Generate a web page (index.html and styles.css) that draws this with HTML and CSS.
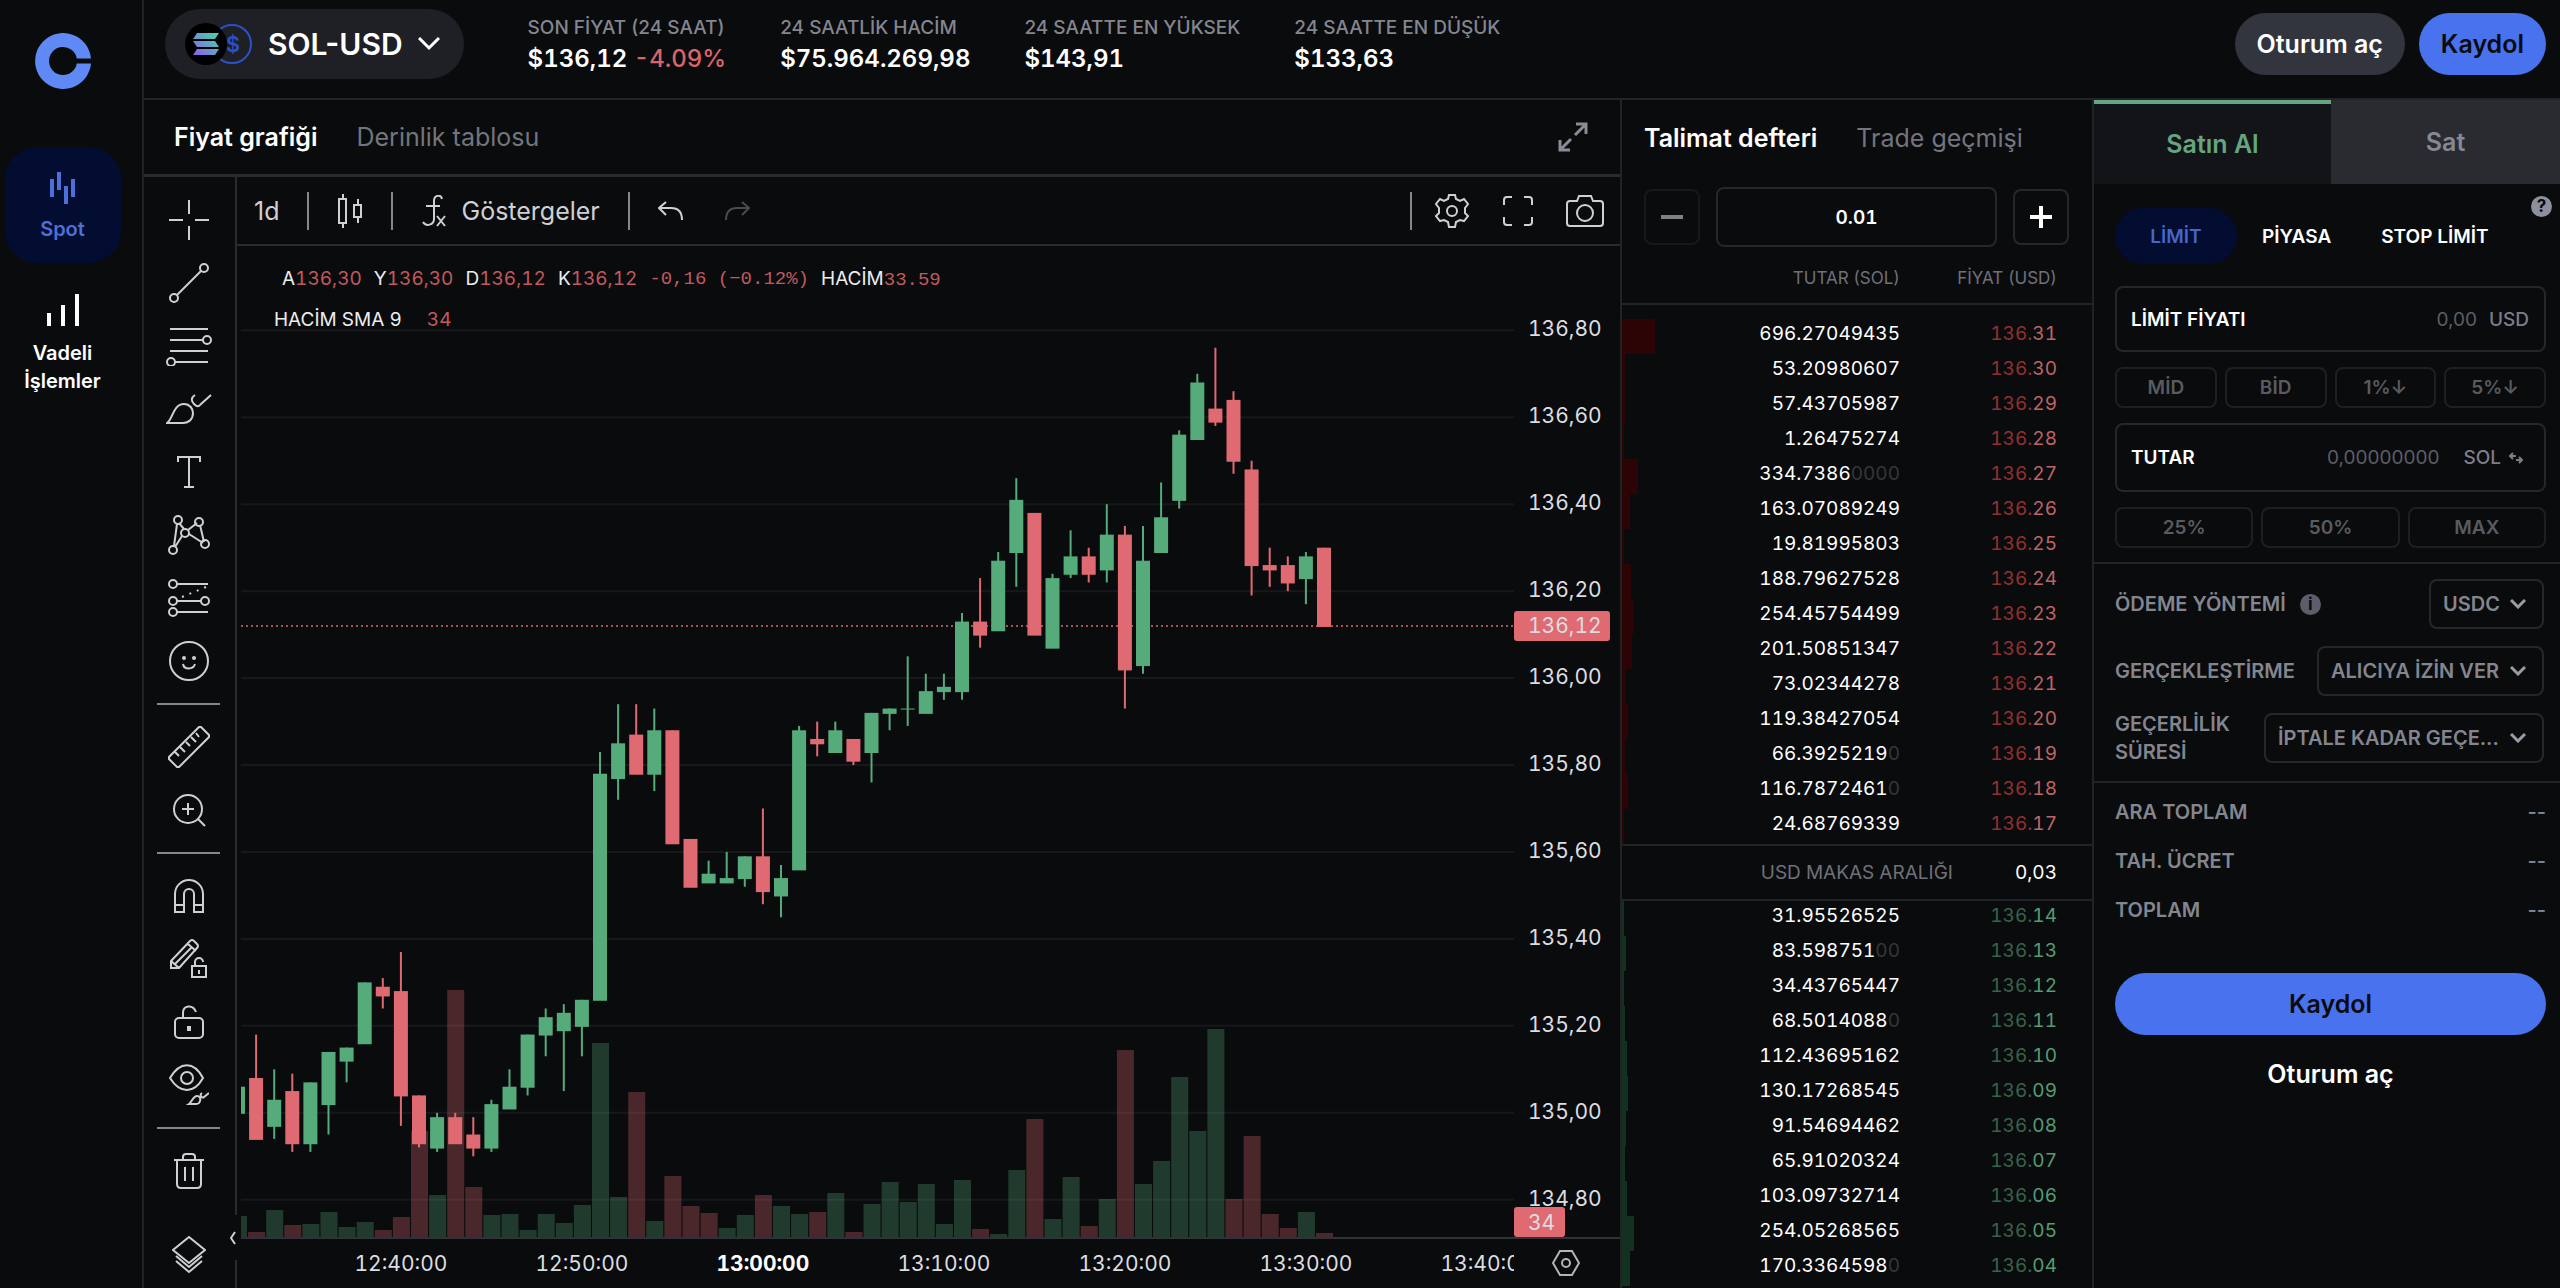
FILE: index.html
```html
<!DOCTYPE html>
<html lang="tr">
<head>
    <meta charset="UTF-8">
    <meta name="viewport" content="width=device-width, initial-scale=1.0">
    <title>SOL-USD</title>
    <link rel="stylesheet" href="styles.css">
</head>
<body>

<nav class="sidebar">
    <a class="logo" href="#" aria-label="Ana sayfa">
        <svg width="56" height="56" viewBox="0 0 56 56" fill="#5f8af5"><path d="M28 42a14 14 0 1 1 13.8-16.4H56A28 28 0 1 0 56 30.4H41.8A14 14 0 0 1 28 42z"/></svg>
    </a>
    <a class="nav-item active" href="#">
        <svg width="28" height="34" viewBox="0 0 28 34" stroke="currentColor" stroke-width="4"><path d="M3 8v18M10 1v18M17 15v18M24 8v18"/></svg>
        <span>Spot</span>
    </a>
    <a class="nav-item" href="#">
        <svg width="34" height="34" viewBox="0 0 34 34" stroke="currentColor" stroke-width="4"><path d="M3 33V20M17 33V12M31 33V1"/></svg>
        <span>Vadeli İşlemler</span>
    </a>
</nav>

<div class="page">
    <header class="header">
        <button class="pair">
            <svg width="68" height="42" viewBox="0 0 68 42">
                <defs>
                    <linearGradient id="sol" x1="0" y1="1" x2="1" y2="0">
                        <stop offset="0" stop-color="#8f5cf0"/>
                        <stop offset="1" stop-color="#3fdca4"/>
                    </linearGradient>
                </defs>
                <circle cx="47" cy="21" r="19" fill="none" stroke="#2c50c8" stroke-width="2"/>
                <text class="coin-text" x="48" y="29" text-anchor="middle">$</text>
                <circle cx="21" cy="21" r="21" fill="#000"/>
                <path fill="url(#sol)" d="M12 10h22l-4 6H8zM8 18h22l4 6H12zM12 26h22l-4 6H8z"/>
            </svg>
            <span>SOL-USD</span>
            <svg width="22" height="14" viewBox="0 0 22 14" fill="none" stroke="#fff" stroke-width="3"><path d="M1 1l10 10L21 1"/></svg>
        </button>
        <dl class="stats">
            <div><dt>SON FİYAT (24 SAAT)</dt><dd>$136,12 <span class="down">-4.09%</span></dd></div>
            <div><dt>24 SAATLİK HACİM</dt><dd>$75.964.269,98</dd></div>
            <div><dt>24 SAATTE EN YÜKSEK</dt><dd>$143,91</dd></div>
            <div><dt>24 SAATTE EN DÜŞÜK</dt><dd>$133,63</dd></div>
        </dl>
        <div class="account">
            <button class="btn btn-gray">Oturum aç</button>
            <button class="btn btn-blue">Kaydol</button>
        </div>
    </header>

    <main class="workspace">
        <section class="chart-panel">
            <div class="tabs chart-tabs">
                <button class="active">Fiyat grafiği</button>
                <button>Derinlik tablosu</button>
                <button class="expand" aria-label="Genişlet">
                    <svg width="30" height="30" viewBox="0 0 30 30" fill="none" stroke="#8a8d96" stroke-width="3"><path d="M17 13L28 2M18 2h10v10M13 17L2 28M2 18v10h10"/></svg>
                </button>
            </div>
            <div class="chart-body">
                <div class="tools">
                    <button aria-label="İmleç"><svg width="42" height="42" viewBox="0 0 42 42" stroke-width="2"><path d="M21 1v14M21 27v14M1 21h14M27 21h14"/></svg></button>
                    <button aria-label="Trend çizgisi"><svg width="40" height="40" viewBox="0 0 40 40"><circle cx="5" cy="35" r="4"/><circle cx="35" cy="5" r="4"/><path d="M8 32L32 8"/></svg></button>
                    <button aria-label="Fibonacci"><svg width="46" height="40" viewBox="0 0 46 40"><path d="M4 3h38M4 14h33M4 25h38M9 36h33"/><circle cx="41" cy="14" r="4"/><circle cx="5" cy="36" r="4"/></svg></button>
                    <button aria-label="Fırça"><svg width="46" height="32" viewBox="0 0 46 32"><path d="M1 30c6-4 6-19 17-19 6 0 9 5 9 9 0 6-4 10-10 10zM29 2c-5 3-3 7-1 9 4 4 5 2 7 0l10-9"/></svg></button>
                    <button aria-label="Metin"><svg width="24" height="34" viewBox="0 0 24 34"><path d="M1 7V2h22v5M12 2v30M7 32h10"/></svg></button>
                    <button aria-label="Formasyon"><svg width="42" height="40" viewBox="0 0 42 40"><path d="M9 9L6 31M11 8l5 6M20 15l9-7M32 10l4 17M21 19l14 9M14 21L7 32"/><circle cx="10" cy="5" r="4"/><circle cx="31" cy="7" r="4"/><circle cx="17" cy="18" r="4"/><circle cx="5" cy="35" r="4"/><circle cx="37" cy="29" r="4"/></svg></button>
                    <button aria-label="Tahmin"><svg width="42" height="38" viewBox="0 0 42 38"><path d="M9 5h31M9 22h24M9 33h31"/><path d="M14 18L38 8" stroke-dasharray="2 6"/><circle cx="5" cy="5" r="4"/><circle cx="5" cy="22" r="4"/><circle cx="37" cy="22" r="4"/><circle cx="5" cy="33" r="4"/></svg></button>
                    <button aria-label="Simge"><svg width="40" height="40" viewBox="0 0 40 40"><circle cx="20" cy="20" r="19"/><circle class="dot" cx="15" cy="17" r="2"/><circle class="dot" cx="25" cy="17" r="2"/><path d="M14 23c1 6 10 6 12 0"/></svg></button>
                    <hr>
                    <button aria-label="Cetvel"><svg width="42" height="42" viewBox="0 0 42 42"><path d="M31 1h2l8 8v2L11 41H9L1 33v-2zM7 26l4 4M12 21l5 5M18 16l4 4M23 11l5 5M28 7l3 4"/></svg></button>
                    <button aria-label="Yakınlaştır"><svg width="34" height="34" viewBox="0 0 34 34"><circle cx="16" cy="16" r="14"/><path d="M16 10v12M10 16h12M26 26l7 7"/></svg></button>
                    <hr>
                    <button aria-label="Mıknatıs"><svg width="30" height="34" viewBox="0 0 30 34"><path d="M1 33V15a14 14 0 0 1 28 0v18h-9V15a5 5 0 0 0-10 0v18zM1 26h9M20 26h9"/></svg></button>
                    <button aria-label="Çizim modunda kal"><svg width="38" height="40" viewBox="0 0 38 40"><path d="M1 22L20 2q2-2 4 0l3 3q2 2 0 4L9 29H1zM1 22l8 7M18 5l8 7M5 25L22 8M22 27h14v11H22zM25 27v-4a4 4 0 0 1 8 0M29 31v4"/></svg></button>
                    <button aria-label="Çizimleri kilitle"><svg width="30" height="34" viewBox="0 0 30 34"><rect x="1" y="13" width="28" height="20" rx="4"/><path d="M9 13V8c0-8 10-9 13-1"/><path d="M15 21v5" stroke-width="4"/></svg></button>
                    <button aria-label="Çizimleri gizle"><svg width="40" height="42" viewBox="0 0 40 42"><path d="M1 14C11-3 25-3 34 14 25 30 11 30 1 14z"/><circle cx="18" cy="14" r="6"/><path d="M20 40c3-2 4-8 8-8 5 0 4 8-1 8zM33 29c-3 2 0 6 2 4l5-4"/></svg></button>
                    <hr>
                    <button aria-label="Sil"><svg width="32" height="36" viewBox="0 0 32 36"><path d="M1 7h30M4 7v24q0 4 4 4h16q4 0 4-4V7M10 7V4q0-3 3-3h6q3 0 3 3v3M12 14v14M20 14v14"/></svg></button>
                    <button class="layers" aria-label="Nesne ağacı"><svg width="34" height="38" viewBox="0 0 34 38"><path d="M17 1l16 13-16 13L1 14zM4 20l13 11 13-11M4 25l13 11 13-11"/></svg></button>
                    <button class="collapse" aria-label="Daralt"><svg width="6" height="14" viewBox="0 0 6 14"><path d="M5 1L1 7l4 6"/></svg></button>
                </div>
                <div class="chart-main">
                    <div class="toolbar">
                        <button>1d</button>
                        <span class="sep"></span>
                        <button aria-label="Mumlar"><svg width="26" height="36" viewBox="0 0 26 36"><path d="M2 6h7v24H2zM6 1v5M6 30v5M17 12h7v12h-7zM21 6v6M21 24v6"/></svg></button>
                        <span class="sep"></span>
                        <button class="indicators"><svg width="26" height="32" viewBox="0 0 26 32"><path d="M21 4c-1-5-8-4-8 2v18c0 6-8 8-11 3M5 11h14M16 21l8 10M24 21l-8 10"/></svg>Göstergeler</button>
                        <span class="sep"></span>
                        <button class="undo" aria-label="Geri al"><svg width="26" height="20" viewBox="0 0 26 20"><path d="M8 1L1 7l7 7M1 7h12q11 0 11 12"/></svg></button>
                        <button class="redo" aria-label="Yinele"><svg width="26" height="20" viewBox="0 0 26 20"><path d="M18 1l7 6-7 7M25 7H13Q2 7 2 19"/></svg></button>
                        <span class="sep push"></span>
                        <button aria-label="Ayarlar"><svg width="36" height="36" viewBox="0 0 36 36"><path d="M15 2h6l1 4 4 2 4-2 4 5-3 4v5l3 3-4 5-4-1-4 2-1 5h-6l-1-5-4-2-4 1-4-5 3-3v-5l-3-4 4-5 4 2 4-2z"/><circle cx="18" cy="18" r="5"/></svg></button>
                        <button aria-label="Tam ekran"><svg width="30" height="30" viewBox="0 0 30 30"><path d="M1 9V4q0-3 3-3h5M21 1h5q3 0 3 3v5M29 21v5q0 3-3 3h-5M9 29H4q-3 0-3-3v-5"/></svg></button>
                        <button aria-label="Görüntü al"><svg width="38" height="32" viewBox="0 0 38 32"><path d="M4 6h7l2-5h12l2 5h7q3 0 3 3v19q0 3-3 3H4q-3 0-3-3V9q0-3 3-3z"/><circle cx="19" cy="18" r="8"/></svg></button>
                    </div>
                    <div class="plot">
                        <svg id="chart" role="img" aria-label="SOL-USD fiyat grafiği"></svg>
                        <div class="legend">
                            <p class="ohlc">
                                <span>A<b>136,30</b></span><span>Y<b>136,30</b></span><span>D<b>136,12</b></span><span>K<b>136,12</b></span>
                                <b class="mono">-0,16 (−0.12%)</b>
                                <span>HACİM<b class="mono">33.59</b></span>
                            </p>
                            <p class="sma">HACİM SMA 9 <b>34</b></p>
                        </div>
                        <button class="axis-settings" aria-label="Eksen ayarları"><svg width="28" height="26" viewBox="0 0 28 26"><path d="M8 1h12l7 12-7 12H8L1 13z"/><circle cx="14" cy="13" r="4"/></svg></button>
                    </div>
                </div>
            </div>
        </section>

        <section class="book">
            <div class="tabs book-tabs">
                <button class="active">Talimat defteri</button>
                <button>Trade geçmişi</button>
            </div>
            <div class="step">
                <button class="disabled" aria-label="Azalt"><svg width="22" height="22" viewBox="0 0 22 22"><path d="M0 11h22"/></svg></button>
                <input type="text" value="0.01" aria-label="Fiyat adımı">
                <button aria-label="Artır"><svg width="22" height="22" viewBox="0 0 22 22"><path d="M0 11h22M11 0v22"/></svg></button>
            </div>
            <table class="asks">
                <thead>
                    <tr><th class="depth"></th><th>TUTAR (SOL)</th><th class="price">FİYAT (USD)</th></tr>
                </thead>
                <tbody id="asks"></tbody>
            </table>
            <div class="spread"><span>USD MAKAS ARALIĞI</span><span>0,03</span></div>
            <table class="bids">
                <tbody id="bids"></tbody>
            </table>
        </section>

        <form class="trade">
            <div class="sides">
                <button type="button" class="buy">Satın Al</button>
                <button type="button" class="sell">Sat</button>
            </div>
            <div class="order">
                <div class="types">
                    <button type="button" class="active">LİMİT</button>
                    <button type="button">PİYASA</button>
                    <button type="button">STOP LİMİT</button>
                    <button type="button" class="help" aria-label="Yardım">?</button>
                </div>
                <div class="field">
                    <label for="limit-price">LİMİT FİYATI</label>
                    <input id="limit-price" type="text" placeholder="0,00">
                    <span>USD</span>
                </div>
                <div class="chips">
                    <button type="button">MİD</button>
                    <button type="button">BİD</button>
                    <button type="button">1%↓</button>
                    <button type="button">5%↓</button>
                </div>
                <div class="field amount">
                    <label for="amount">TUTAR</label>
                    <input id="amount" type="text" placeholder="0,00000000">
                    <button type="button">SOL <svg width="14" height="12" viewBox="0 0 14 12"><path d="M4 1L1 4l3 3M1 4h6M10 5l3 3-3 3M13 8H7"/></svg></button>
                </div>
                <div class="chips">
                    <button type="button">25%</button>
                    <button type="button">50%</button>
                    <button type="button">MAX</button>
                </div>
            </div>
            <div class="options">
                <div class="option">
                    <label for="pay">ÖDEME YÖNTEMİ</label><span class="info">i</span>
                    <div class="select">
                        <select id="pay"><option>USDC</option></select>
                        <svg width="16" height="10" viewBox="0 0 16 10"><path d="M1 1l7 7 7-7"/></svg>
                    </div>
                </div>
                <div class="option">
                    <label for="exec">GERÇEKLEŞTİRME</label>
                    <div class="select">
                        <select id="exec"><option>ALICIYA İZİN VER</option></select>
                        <svg width="16" height="10" viewBox="0 0 16 10"><path d="M1 1l7 7 7-7"/></svg>
                    </div>
                </div>
                <div class="option">
                    <label for="tif">GEÇERLİLİK SÜRESİ</label>
                    <div class="select wide">
                        <select id="tif"><option>İPTALE KADAR GEÇE...</option></select>
                        <svg width="16" height="10" viewBox="0 0 16 10"><path d="M1 1l7 7 7-7"/></svg>
                    </div>
                </div>
            </div>
            <dl class="totals">
                <div><dt>ARA TOPLAM</dt><dd>--</dd></div>
                <div><dt>TAH. ÜCRET</dt><dd>--</dd></div>
                <div><dt>TOPLAM</dt><dd>--</dd></div>
            </dl>
            <div class="actions">
                <button type="button" class="btn btn-blue">Kaydol</button>
                <button type="button" class="btn btn-plain">Oturum aç</button>
            </div>
        </form>
    </main>
</div>

<script src="script.js"></script>
</body>
</html>
```
FILE: styles.css
```css
* {
    box-sizing: border-box;
}

body {
    margin: 0;
    height: 100vh;
    display: flex;
    overflow: hidden;
    background-color: #0a0b0d;
    color: #fff;
    font-family: Inter, "Liberation Sans", sans-serif;
    font-size: 19px;
}

button,
input,
select {
    font: inherit;
    color: inherit;
    background: none;
    border: none;
    padding: 0;
    margin: 0;
}

button {
    cursor: pointer;
}

a {
    color: inherit;
    text-decoration: none;
}

svg {
    display: block;
    flex-shrink: 0;
}

dl, dd, p {
    margin: 0;
}

/* sidebar */
.sidebar {
    width: 144px;
    flex-shrink: 0;
    padding: 33px 21px 0 4px;
    border-right: 2px solid #222327;
    display: flex;
    flex-direction: column;
    align-items: center;
}

.logo {
    margin-bottom: 58px;
}

.nav-item {
    width: 116px;
    height: 116px;
    border-radius: 32px;
    padding: 24px 10px 0;
    display: flex;
    flex-direction: column;
    align-items: center;
    gap: 10px;
    text-align: center;
    font-size: 20px;
    font-weight: 600;
    line-height: 28px;
}

.nav-item + .nav-item {
    padding-top: 30px;
    gap: 12px;
}

.nav-item.active {
    background-color: #020d31;
    color: #4d70d8;
}

.page {
    flex: 1;
    min-width: 0;
    display: flex;
    flex-direction: column;
}

/* header */
.header {
    height: 100px;
    flex-shrink: 0;
    padding: 0 14px 10px 21px;
    border-bottom: 2px solid #222327;
    display: flex;
    align-items: center;
}

.pair {
    height: 70px;
    padding: 0 24px 0 20px;
    border-radius: 35px;
    background-color: #1f2025;
    display: flex;
    align-items: center;
    gap: 15px;
    font-size: 30px;
    font-weight: 600;
}

.coin-text {
    font-size: 22px;
    fill: #2c50c8;
}

.stats {
    flex: 1;
    margin-left: 64px;
    display: flex;
    gap: 54px;
    white-space: nowrap;
}

.stats dt {
    color: #83868f;
    font-size: 19px;
    font-weight: 500;
    line-height: 30px;
}

.stats dd {
    font-size: 24px;
    font-weight: 600;
    font-variant-numeric: tabular-nums;
    line-height: 32px;
}

.stats .down {
    color: #d9646b;
    font-weight: 500;
}

.account {
    display: flex;
    gap: 14px;
}

.btn {
    height: 62px;
    padding: 0 22px;
    border-radius: 32px;
    font-size: 25px;
    font-weight: 600;
}

.btn-gray {
    background-color: #32353d;
}

.btn-blue {
    background-color: #4973ee;
    color: #0a0b0d;
}

/* workspace */
.workspace {
    flex: 1;
    min-height: 0;
    display: grid;
    grid-template-columns: minmax(0, 1fr) 474px 466px;
}

.tabs {
    height: 77px;
    display: flex;
    align-items: center;
    gap: 39px;
    color: #72757e;
    font-size: 25px;
    white-space: nowrap;
}

.tabs .active {
    color: #fff;
    font-weight: 600;
}

.chart-panel {
    display: flex;
    flex-direction: column;
    min-height: 0;
}

.chart-tabs {
    padding: 0 32px 0 30px;
    border-bottom: 3px solid #2a2b30;
    flex-shrink: 0;
}

.expand {
    margin-left: auto;
}

.chart-body {
    flex: 1;
    min-height: 0;
    display: flex;
}

/* drawing tools */
.tools {
    position: relative;
    width: 93px;
    padding: 11px 2px 2px 0;
    border-right: 2px solid #2a2b30;
    display: flex;
    flex-direction: column;
    align-items: center;
    color: #cfd0d4;
}

.tools button {
    width: 63px;
    height: 63px;
    display: flex;
    align-items: center;
    justify-content: center;
}

.tools svg,
.toolbar svg,
.axis-settings svg {
    fill: none;
    stroke: currentColor;
    stroke-width: 2;
}

.tools .dot {
    fill: currentColor;
    stroke: none;
}

.tools hr {
    width: 63px;
    height: 2px;
    margin: 11px 0 10px;
    border: none;
    background-color: #85878c;
}

.tools .layers {
    margin-top: auto;
}

.tools .collapse {
    position: absolute;
    right: -4px;
    bottom: 28px;
    width: 12px;
    height: 45px;
    background-color: #0a0b0d;
}

.chart-main {
    flex: 1;
    min-width: 0;
    display: flex;
    flex-direction: column;
}

.toolbar {
    height: 69px;
    flex-shrink: 0;
    padding: 0 16px 0 17px;
    border-bottom: 2px solid #2a2b30;
    display: flex;
    align-items: center;
    gap: 28px;
    color: #cfd0d4;
    font-size: 25px;
}

.toolbar .sep {
    width: 2px;
    height: 38px;
    background-color: #85878c;
}

.toolbar .indicators {
    display: flex;
    align-items: center;
    gap: 14px;
}

.toolbar .redo {
    margin-left: 12px;
    color: #4a4b4f;
}

.toolbar .push {
    margin-left: auto;
    margin-right: -11px;
}

.toolbar .push ~ button {
    margin-left: 5px;
}

.plot {
    position: relative;
    flex: 1;
    min-height: 0;
}

#chart {
    width: 100%;
    height: 100%;
    font-size: 21px;
    font-variant-numeric: tabular-nums;
}

.grid-line { stroke: #17181b; stroke-width: 2; }
.axis-line { stroke: #303238; stroke-width: 2; }
.price-line { stroke: #a55257; stroke-width: 2; stroke-dasharray: 2 3; }
.up-candle { fill: #56ab7b; stroke: #56ab7b; }
.down-candle { fill: #e06a71; stroke: #e06a71; }
.up-volume { fill: #56ab7b; opacity: 0.3; }
.down-volume { fill: #e06a71; opacity: 0.3; }
.axis-text { fill: #dcdde0; }
.axis-text.major { fill: #fff; font-weight: 700; }
.tag { fill: #e06a71; }

.legend {
    position: absolute;
    top: 18px;
    left: 37px;
    font-size: 19px;
    font-variant-numeric: tabular-nums;
    line-height: 30px;
    color: #eceded;
    white-space: nowrap;
}

.legend b {
    color: #c1595f;
    font-weight: 400;
}

.legend .mono {
    font-family: "Liberation Mono", monospace;
}

.ohlc {
    display: flex;
    gap: 12px;
    padding-left: 8px;
    margin-bottom: 10px;
}

.sma b {
    margin-left: 20px;
}

.axis-settings {
    position: absolute;
    right: 40px;
    bottom: 12px;
    color: #b4b5b9;
}

/* order book */
.book {
    border-left: 2px solid #222327;
    border-right: 2px solid #222327;
    overflow: hidden;
}

.book-tabs {
    height: 75px;
    padding: 0 22px;
}

.step {
    padding: 12px 23px 0 22px;
    display: flex;
    align-items: center;
    gap: 16px;
}

.step button {
    width: 56px;
    height: 56px;
    border: 2px solid #26272c;
    border-radius: 8px;
    display: flex;
    align-items: center;
    justify-content: center;
}

.step svg {
    stroke: currentColor;
    stroke-width: 4;
}

.step .disabled {
    border-color: #17181b;
    color: #808186;
}

.step input {
    flex: 1;
    min-width: 0;
    height: 60px;
    border: 2px solid #26272c;
    border-radius: 8px;
    text-align: center;
    font-weight: 600;
    font-variant-numeric: tabular-nums;
}

.book table {
    width: 100%;
    table-layout: fixed;
    border-collapse: collapse;
    font-variant-numeric: tabular-nums;
}

.book th {
    height: 57px;
    padding: 6px 0 0;
    border-bottom: 2px solid #222327;
    color: #6f7179;
    font-size: 17px;
    font-weight: 400;
    text-align: right;
}

.book td {
    height: 35px;
    padding: 0 0 5px;
    text-align: right;
    line-height: 30px;
}

.book .depth {
    width: 60px;
    padding: 0;
}

.book .price {
    width: 192px;
    padding-right: 35px;
}

.asks tbody::before {
    content: "";
    display: block;
    height: 14px;
}

.bar {
    height: 35px;
    min-width: 2px;
}

.asks .bar { background-color: #2c0406; }
.bids .bar { background-color: #123120; }
.asks .price { color: #93302f; }
.bids .price { color: #376349; }
.book thead .price { color: #6f7179; }
.asks .cents { color: #bd6467; }
.bids .cents { color: #539c73; }

.zeros {
    color: #35363b;
}

.spread {
    height: 57px;
    padding: 0 35px 0 0;
    border-top: 2px solid #222327;
    border-bottom: 2px solid #222327;
    display: flex;
    align-items: center;
    justify-content: flex-end;
    gap: 62px;
    font-variant-numeric: tabular-nums;
}

.spread span:first-child {
    color: #6f7179;
}

/* trade form */
.trade {
    font-weight: 500;
}

.sides {
    height: 84px;
    display: flex;
}

.sides button {
    font-size: 25px;
    font-weight: 600;
}

.sides .buy {
    width: 237px;
    border-top: 4px solid #64a682;
    background-color: #131417;
    color: #64a682;
}

.sides .sell {
    flex: 1;
    background-color: #292b31;
    color: #868993;
}

.order {
    padding: 24px 14px 14px 21px;
    border-bottom: 2px solid #222327;
    display: flex;
    flex-direction: column;
    gap: 15px;
}

.types {
    position: relative;
    display: flex;
    margin-bottom: 7px;
    font-weight: 600;
}

.types button {
    height: 56px;
    padding: 0 25px;
    border-radius: 28px;
}

.types .active {
    min-width: 122px;
    background-color: #020d31;
    color: #4666cc;
}

.types .help {
    position: absolute;
    top: -12px;
    right: -6px;
    width: 21px;
    height: 21px;
    padding: 0;
    border-radius: 50%;
    background-color: #8d909a;
    color: #0a0b0d;
    font-size: 17px;
    font-weight: 700;
    line-height: 21px;
}

.field {
    height: 66px;
    padding: 0 15px 0 14px;
    border: 2px solid #26272c;
    border-radius: 8px;
    display: flex;
    align-items: center;
    gap: 12px;
    color: #7c7e87;
}

.field.amount {
    height: 69px;
}

.field label {
    color: #fff;
    font-weight: 600;
}

.field input {
    flex: 1;
    min-width: 0;
    text-align: right;
    font-weight: 400;
}

.field input::placeholder {
    color: #5c5e66;
}

.field button {
    display: flex;
    align-items: center;
    gap: 8px;
    margin: 0 6px 0 12px;
}

.field svg {
    fill: none;
    stroke: currentColor;
    stroke-width: 2;
}

.chips {
    display: flex;
    gap: 8px;
}

.chips button {
    flex: 1;
    height: 41px;
    border: 2px solid #1e1f23;
    border-radius: 8px;
    color: #595b60;
    font-weight: 600;
}

.options {
    padding: 15px 16px 18px 21px;
    border-bottom: 2px solid #222327;
    display: flex;
    flex-direction: column;
    gap: 17px;
    color: #83868f;
    font-size: 20px;
    font-weight: 600;
}

.option {
    height: 50px;
    display: flex;
    align-items: center;
}

.option label {
    line-height: 28px;
}

.info {
    width: 21px;
    height: 21px;
    flex-shrink: 0;
    margin-left: 14px;
    border-radius: 50%;
    background-color: #5b5e6a;
    color: #0a0b0d;
    font-size: 17px;
    font-weight: 700;
    line-height: 21px;
    text-align: center;
}

.select {
    position: relative;
    margin-left: auto;
    flex-shrink: 0;
}

.select select {
    appearance: none;
    width: 100%;
    height: 50px;
    padding: 0 42px 0 12px;
    border: 2px solid #26272c;
    border-radius: 8px;
}

.select.wide {
    width: 280px;
}

.select.wide select {
    padding-right: 30px;
}

.select svg {
    position: absolute;
    right: 18px;
    top: 20px;
    fill: none;
    stroke: #9a9ca3;
    stroke-width: 3;
    pointer-events: none;
}

.totals {
    padding: 4px 14px 0 21px;
    color: #83868f;
    font-size: 20px;
}

.totals div {
    height: 49px;
    display: flex;
    align-items: center;
    justify-content: space-between;
}

.totals dt {
    font-weight: 600;
}

.actions {
    padding: 39px 14px 0 21px;
    display: flex;
    flex-direction: column;
    gap: 8px;
}
```
FILE: script.js
```js
// one row per minute: open, high, low, close, volume, volume colour
const candles = [
    [135.00, 135.06, 135.00, 135.06, 21, 'up'],
    [135.08, 135.18, 134.94, 134.94, 5, 'down'],
    [134.97, 135.10, 134.94, 135.03, 27, 'up'],
    [135.05, 135.09, 134.91, 134.93, 12, 'down'],
    [134.93, 135.07, 134.91, 135.07, 13, 'up'],
    [135.02, 135.14, 134.95, 135.14, 25, 'up'],
    [135.12, 135.15, 135.07, 135.15, 10, 'up'],
    [135.16, 135.30, 135.16, 135.30, 15, 'up'],
    [135.29, 135.31, 135.24, 135.27, 7, 'down'],
    [135.28, 135.37, 134.97, 135.04, 20, 'down'],
    [135.04, 135.04, 134.92, 134.93, 106, 'down'],
    [134.92, 135.00, 134.91, 134.99, 42, 'up'],
    [134.99, 135.00, 134.93, 134.93, 247, 'down'],
    [134.95, 134.99, 134.90, 134.92, 50, 'down'],
    [134.92, 135.03, 134.91, 135.02, 22, 'up'],
    [135.01, 135.10, 135.01, 135.06, 23, 'up'],
    [135.06, 135.18, 135.04, 135.18, 7, 'up'],
    [135.18, 135.24, 135.13, 135.22, 23, 'up'],
    [135.19, 135.25, 135.05, 135.23, 14, 'up'],
    [135.20, 135.26, 135.13, 135.26, 32, 'up'],
    [135.26, 135.83, 135.26, 135.78, 194, 'up'],
    [135.77, 135.94, 135.72, 135.85, 40, 'up'],
    [135.87, 135.94, 135.78, 135.78, 145, 'down'],
    [135.78, 135.93, 135.74, 135.88, 16, 'up'],
    [135.88, 135.88, 135.62, 135.62, 61, 'down'],
    [135.63, 135.63, 135.52, 135.52, 31, 'down'],
    [135.53, 135.58, 135.53, 135.55, 24, 'down'],
    [135.53, 135.60, 135.53, 135.54, 9, 'up'],
    [135.54, 135.59, 135.52, 135.59, 22, 'up'],
    [135.59, 135.70, 135.48, 135.51, 42, 'down'],
    [135.50, 135.57, 135.45, 135.54, 31, 'up'],
    [135.56, 135.89, 135.56, 135.88, 23, 'up'],
    [135.86, 135.90, 135.82, 135.85, 25, 'down'],
    [135.83, 135.90, 135.83, 135.88, 44, 'up'],
    [135.86, 135.86, 135.80, 135.81, 5, 'down'],
    [135.83, 135.92, 135.76, 135.92, 33, 'up'],
    [135.92, 135.93, 135.88, 135.93, 55, 'up'],
    [135.93, 136.05, 135.89, 135.93, 35, 'up'],
    [135.92, 136.01, 135.92, 135.97, 53, 'up'],
    [135.97, 136.01, 135.95, 135.98, 13, 'up'],
    [135.97, 136.15, 135.95, 136.13, 57, 'up'],
    [136.13, 136.23, 136.07, 136.10, 8, 'down'],
    [136.11, 136.29, 136.11, 136.27, 3, 'up'],
    [136.29, 136.46, 136.21, 136.41, 67, 'up'],
    [136.38, 136.38, 136.10, 136.10, 118, 'down'],
    [136.07, 136.24, 136.07, 136.23, 18, 'up'],
    [136.24, 136.34, 136.23, 136.28, 60, 'up'],
    [136.28, 136.30, 136.22, 136.24, 11, 'down'],
    [136.25, 136.40, 136.22, 136.33, 38, 'up'],
    [136.33, 136.35, 135.93, 136.02, 187, 'down'],
    [136.03, 136.35, 136.01, 136.27, 53, 'up'],
    [136.29, 136.45, 136.29, 136.37, 76, 'up'],
    [136.41, 136.57, 136.39, 136.56, 160, 'up'],
    [136.55, 136.70, 136.55, 136.68, 106, 'up'],
    [136.62, 136.76, 136.58, 136.59, 208, 'up'],
    [136.64, 136.66, 136.47, 136.50, 38, 'down'],
    [136.48, 136.50, 136.19, 136.26, 101, 'down'],
    [136.26, 136.30, 136.21, 136.25, 23, 'down'],
    [136.26, 136.28, 136.20, 136.22, 9, 'down'],
    [136.23, 136.29, 136.17, 136.28, 25, 'up'],
    [136.30, 136.30, 136.12, 136.12, 4, 'down']
];

const asks = [
    ['696.27049435', '136.31'], ['53.20980607', '136.30'], ['57.43705987', '136.29'],
    ['1.26475274', '136.28'], ['334.73860000', '136.27'], ['163.07089249', '136.26'],
    ['19.81995803', '136.25'], ['188.79627528', '136.24'], ['254.45754499', '136.23'],
    ['201.50851347', '136.22'], ['73.02344278', '136.21'], ['119.38427054', '136.20'],
    ['66.39252190', '136.19'], ['116.78724610', '136.18'], ['24.68769339', '136.17']
];

const bids = [
    ['31.95526525', '136.14'], ['83.59875100', '136.13'], ['34.43765447', '136.12'],
    ['68.50140880', '136.11'], ['112.43695162', '136.10'], ['130.17268545', '136.09'],
    ['91.54694462', '136.08'], ['65.91020324', '136.07'], ['103.09732714', '136.06'],
    ['254.05268565', '136.05'], ['170.33645980', '136.04']
];

function renderBook(id, rows) {
    document.getElementById(id).innerHTML = rows.map(([amount, price]) => {
        const zeros = amount.match(/0*$/)[0];
        const digits = amount.slice(0, amount.length - zeros.length);
        const width = Math.round(Number(amount) * 0.048);
        return `<tr>
            <td class="depth"><div class="bar" style="width: ${width}px"></div></td>
            <td>${digits}<span class="zeros">${zeros}</span></td>
            <td class="price">${price.slice(0, 4)}<span class="cents">${price.slice(4)}</span></td>
        </tr>`;
    }).join('');
}

function renderChart() {
    const svg = document.getElementById('chart');
    const width = svg.clientWidth;
    const height = svg.clientHeight;
    const left = 4;
    const right = width - 106;
    const bottom = height - 50;
    const step = 18.1;
    const topPrice = 136.994;
    const range = 2.282;
    const x = i => right - 190 - (candles.length - 1 - i) * step;
    const y = price => (topPrice - price) / range * bottom;
    const format = price => price.toFixed(2).replace('.', ',');
    let out = `<clipPath id="area"><rect x="${left}" y="0" width="${right - left}" height="${height}"/></clipPath>`;

    for (let p = 13480; p <= 13680; p += 20) {
        const py = y(p / 100);
        out += `<line class="grid-line" x1="${left}" x2="${right}" y1="${py}" y2="${py}"/>`;
        out += `<text class="axis-text" x="${right + 14}" y="${py + 6}">${format(p / 100)}</text>`;
    }

    out += '<g clip-path="url(#area)">';
    candles.forEach((c, i) => {
        out += `<rect class="${c[5]}-volume" x="${x(i) - 8}" y="${bottom - c[4] - 1}" width="17" height="${c[4]}"/>`;
    });
    const last = y(136.12);
    out += `<line class="price-line" x1="${left}" x2="${right}" y1="${last}" y2="${last}"/>`;
    candles.forEach(([open, high, low, close], i) => {
        // the 13:25 candle closed lower although its volume counts as buying
        const kind = close >= open ? 'up' : 'down';
        const top = y(Math.max(open, close));
        const body = Math.abs(y(open) - y(close));
        out += `<g class="${kind}-candle"><line x1="${x(i)}" x2="${x(i)}" y1="${y(high)}" y2="${y(low)}" stroke-width="2"/>`;
        out += `<rect x="${x(i) - 7}" y="${top}" width="14" height="${body + 1}" stroke="none"/></g>`;
    });

    // time labels every ten minutes, starting at 12:40
    ['12:40:00', '12:50:00', '13:00:00', '13:10:00', '13:20:00', '13:30:00', '13:40:00'].forEach((label, n) => {
        const major = label === '13:00:00' ? ' major' : '';
        out += `<text class="axis-text${major}" x="${x(9 + n * 10)}" y="${bottom + 33}" text-anchor="middle">${label}</text>`;
    });
    out += '</g>';

    out += `<line class="axis-line" x1="${left}" x2="${width}" y1="${bottom}" y2="${bottom}"/>`;
    out += `<rect class="tag" x="${right}" y="${last - 15}" width="96" height="30" rx="3"/>`;
    out += `<text class="axis-text" x="${right + 14}" y="${last + 7}">136,12</text>`;
    out += `<rect class="tag" x="${right}" y="${bottom - 31}" width="51" height="30" rx="3"/>`;
    out += `<text class="axis-text" x="${right + 14}" y="${bottom - 8}">34</text>`;
    svg.innerHTML = out;
}

renderBook('asks', asks);
renderBook('bids', bids);
renderChart();
window.addEventListener('resize', renderChart);
```
